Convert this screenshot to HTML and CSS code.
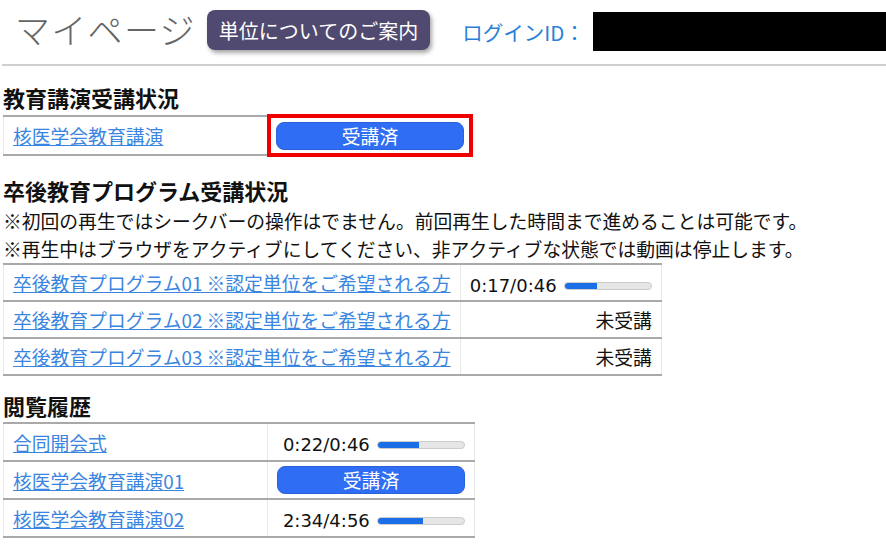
FILE: index.html
```html
<!DOCTYPE html>
<html lang="ja">
<head>
    <meta charset="UTF-8">
    <title>マイページ</title>
    <link rel="stylesheet" href="styles.css">
</head>
<body>
    <div class="header">
        <h1 class="title">マイページ</h1>
        <button class="guideBtn">単位についてのご案内</button>
        <span class="loginLabel">ログインID：</span>
        <span class="loginId"></span>
    </div>
    <hr class="line">

    <h2>教育講演受講状況</h2>
    <table class="list short">
        <tr>
            <td><a href="#">核医学会教育講演</a></td>
            <td class="status marked"><span class="doneBtn">受講済</span></td>
        </tr>
    </table>

    <h2 class="second">卒後教育プログラム受講状況</h2>
    <p class="note">※初回の再生ではシークバーの操作はでません。前回再生した時間まで進めることは可能です。</p>
    <p class="note">※再生中はブラウザをアクティブにしてください、非アクティブな状態では動画は停止します。</p>
    <table class="list wide">
        <tr>
            <td><a href="#">卒後教育プログラム01 ※認定単位をご希望される方</a></td>
            <td class="status left">
                <span class="time">0:17/0:46</span>
                <span class="bar"><span class="fill" style="width: 37%"></span></span>
            </td>
        </tr>
        <tr>
            <td><a href="#">卒後教育プログラム02 ※認定単位をご希望される方</a></td>
            <td class="status">未受講</td>
        </tr>
        <tr>
            <td><a href="#">卒後教育プログラム03 ※認定単位をご希望される方</a></td>
            <td class="status">未受講</td>
        </tr>
    </table>

    <h2 class="third">閲覧履歴</h2>
    <table class="list short history">
        <tr>
            <td><a href="#">合同開会式</a></td>
            <td class="status">
                <span class="time">0:22/0:46</span>
                <span class="bar"><span class="fill" style="width: 48%"></span></span>
            </td>
        </tr>
        <tr>
            <td><a href="#">核医学会教育講演01</a></td>
            <td class="status"><span class="doneBtn">受講済</span></td>
        </tr>
        <tr>
            <td><a href="#">核医学会教育講演02</a></td>
            <td class="status">
                <span class="time">2:34/4:56</span>
                <span class="bar"><span class="fill" style="width: 52%"></span></span>
            </td>
        </tr>
    </table>
</body>
</html>
```

FILE: styles.css
```css
body {
    margin: 0;
    padding: 0 0 0 3px;
    font-family: "Noto Sans CJK JP", "Noto Sans", sans-serif;
    color: #111;
    background-color: white;
}
.header {
    display: flex;
    align-items: center;
    height: 64px;
}
.header > * {
    flex-shrink: 0;
    white-space: nowrap;
}
.title {
    margin: 0 11px 0 12px;
    font-size: 35px;
    font-weight: 300;
    letter-spacing: 1.3px;
    color: #666;
    position: relative;
    top: -4px;
}
.guideBtn {
    height: 40px;
    padding: 0 12px;
    font-family: inherit;
    font-size: 20px;
    color: white;
    background-color: #514a70;
    border: none;
    border-radius: 8px;
    box-shadow: 2px 3px 4px rgba(0, 0, 0, 0.35);
    position: relative;
    top: -2px;
}
.loginLabel {
    margin-left: 32px;
    font-size: 20.5px;
    color: #2a7fd6;
}
.header .loginId {
    flex: 1;
    min-width: 0;
    height: 39px;
    margin-left: 8px;
    background-color: black;
    position: relative;
    top: -1px;
}
.line {
    margin: 0 0 0 -1px;
    border: none;
    border-top: 2px solid #cfcfcf;
}
h2 {
    margin: 17px 0 3px 0;
    font-size: 22px;
    font-weight: bold;
    line-height: 28px;
}
h2.second {
    margin-top: 19px;
}
h2.third {
    margin-top: 15px;
}
.note {
    margin: 0;
    font-size: 18.8px;
    line-height: 28px;
}
.list {
    border-collapse: collapse;
    font-size: 18.8px;
}
.list td {
    height: 35px;
    padding: 0 9px;
    border-top: 2px solid #a9a9a9;
    border-bottom: 2px solid #a9a9a9;
    border-left: 1px solid #e8e8e8;
    border-right: 1px solid #e8e8e8;
    white-space: nowrap;
}
.history td {
    height: 36px;
}
.short td:first-child {
    width: 245px;
}
.short td.status {
    width: 188px;
}
.wide td:first-child {
    width: 435px;
}
.wide td.status {
    width: 178px;
}
.list a {
    color: #3a85e0;
}
.status {
    text-align: right;
}
.status.left {
    text-align: left;
}
.list td.marked {
    border: 4px solid #ee0000;
    padding: 0 5px;
}
.doneBtn {
    display: block;
    height: 26px;
    line-height: 26px;
    text-align: center;
    color: white;
    background-color: #2f6ef4;
    border-radius: 8px;
    border: 1px solid #2a62d8;
}
.time {
    font-family: "DejaVu Sans", sans-serif;
    font-size: 18px;
    vertical-align: middle;
}
.bar {
    display: inline-block;
    width: 86px;
    height: 6px;
    margin-left: 3px;
    background-color: #e6e6e6;
    border: 1px solid #cccccc;
    border-radius: 4px;
    overflow: hidden;
    vertical-align: middle;
}
.fill {
    display: block;
    height: 100%;
    background-color: #1a6fe6;
}
```
